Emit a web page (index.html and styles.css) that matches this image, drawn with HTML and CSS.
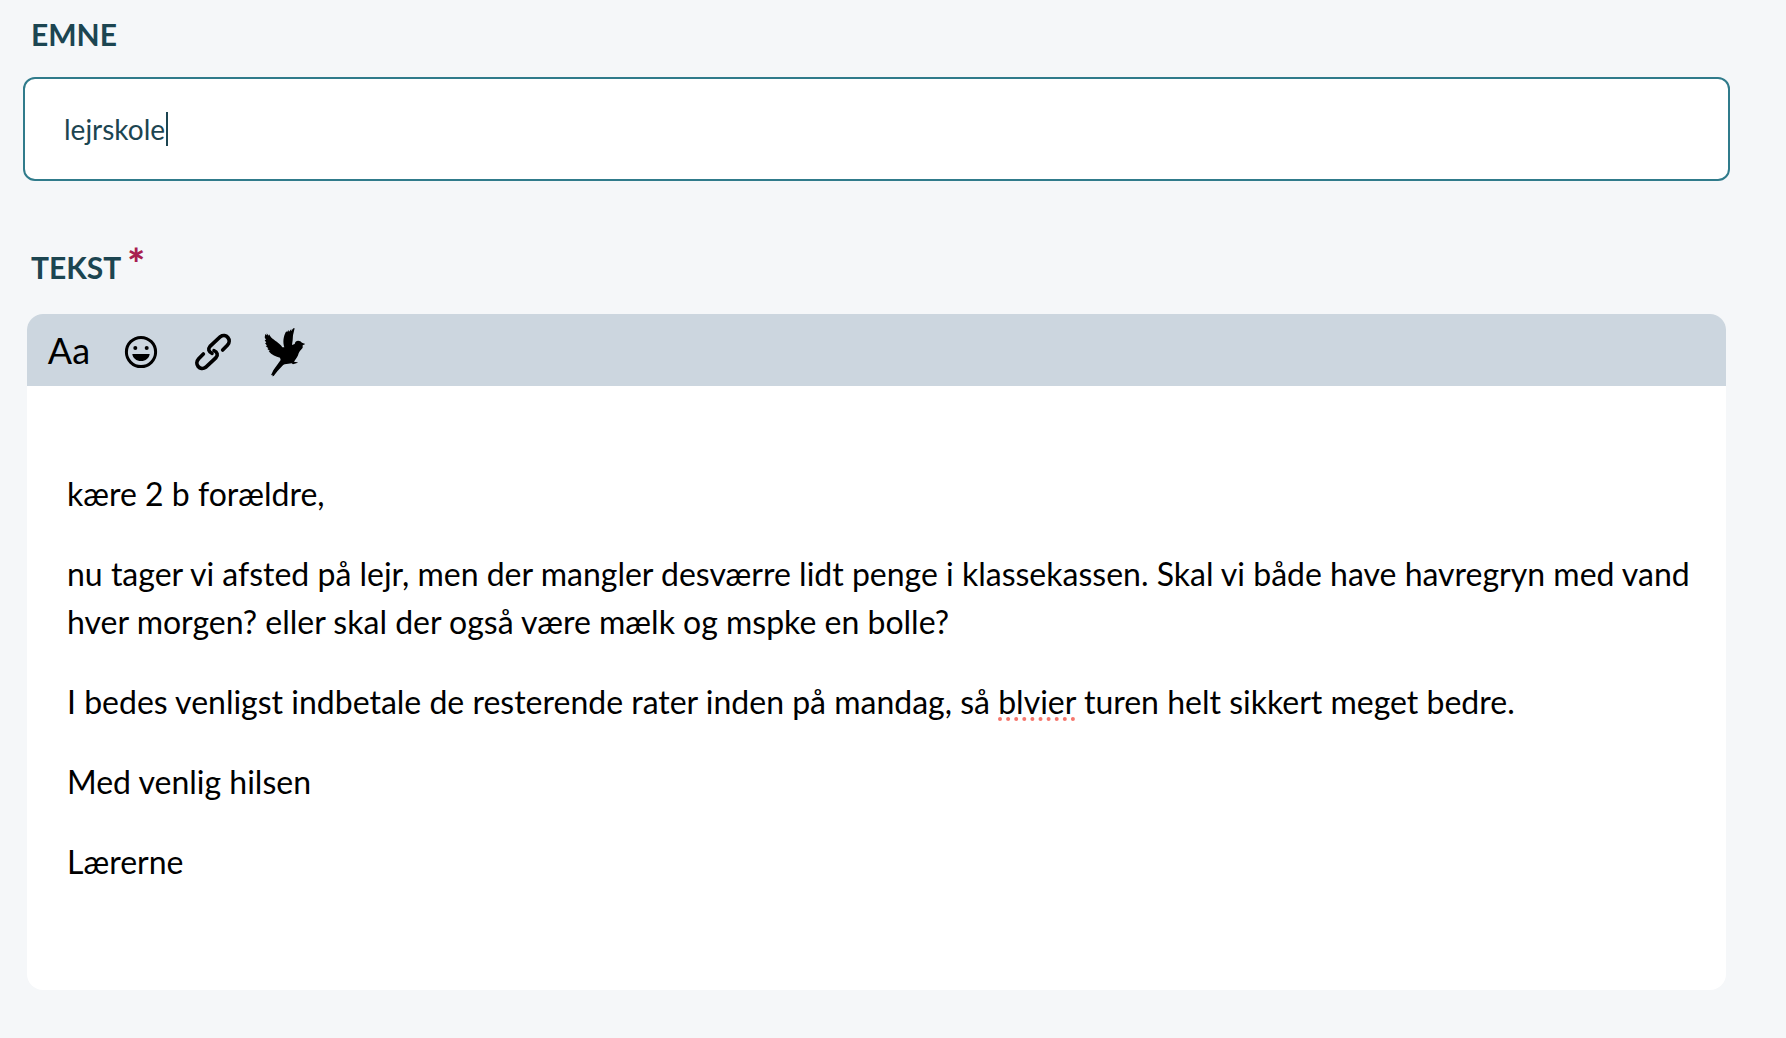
FILE: index.html
```html
<!DOCTYPE html>
<html lang="da">
<head>
<meta charset="utf-8">
<meta name="viewport" content="width=device-width, initial-scale=1">
<title>Ny besked</title>
<link rel="stylesheet" href="styles.css">
</head>
<body>
<form class="message">
  <div class="field">
    <label class="label" for="subject">EMNE</label>
    <div class="subject-box">
      <input class="subject" id="subject" type="text" value="lejrskole" spellcheck="false">
      <span class="caret"></span>
    </div>
  </div>
  <div class="field">
    <div class="label" id="text-label">TEKST<span class="required">*</span></div>
    <div class="editor">
      <div class="toolbar" role="toolbar">
        <button class="tool tool-text" type="button">Aa</button>
        <button class="tool" type="button" aria-label="Emoji">
          <svg class="icon" viewBox="0 -2 48 48">
            <circle cx="24" cy="24" r="14.6" fill="none" stroke="#000" stroke-width="3"/>
            <circle cx="18.300" cy="20" r="2"/><circle cx="29.700" cy="20" r="2"/>
            <path d="M15.300 26h17.400c-.6 4.300-4 7-8.700 7s-8.100-2.700-8.700-7z"/>
          </svg>
        </button>
        <button class="tool" type="button" aria-label="Link">
          <svg class="icon" viewBox="-3 -12 144 144" fill="none" stroke="#000" stroke-width="11" stroke-linecap="round">
            <path d="M98 60L112 46C127 30 108 8 91 20L60 49C53 57 56 66 66 70"/>
            <path d="M40 72L26 86C11 102 30 124 47 112L78 83C85 75 82 66 72 62"/>
          </svg>
        </button>
        <button class="tool" type="button" aria-label="Fugl">
          <svg class="icon icon-bird" viewBox="0 0 180 180">
            <path d="M31 42l5 4-1-6 6 7 1-4 6 9c10 10 25 16 34 30l6 0c-5-14-3-32 4-45l3-3 1 3 4-7 2 5 7-8-1 7 7-9 4 0-2 8-3 13-1 15-2 14 8-3c2-9 9-12 17-8l5 4 10 4-8 4 0 7c-3 6-10 9-12 17-2 10-8 16-14 25l9 2 3-1-3 3-7 2-5 2-4-3-10 1c-8 1-15 1-19 8l-14 15-11 14-4 1 1-5-5 2 7-15 22-31-2-7c-12-3-25-8-34-19l4-1-8-6 3-2-8-7 4-1-6-8 4-1-5-8 4 0-4-8z"/>
          </svg>
        </button>
      </div>
      <div class="content" contenteditable="true" role="textbox" aria-multiline="true" aria-labelledby="text-label" spellcheck="false">
        <p>kære 2 b forældre,</p>
        <p>nu tager vi afsted på lejr, men der mangler desværre lidt penge i klassekassen. Skal vi både have havregryn med vand hver morgen? eller skal der også være mælk og mspke en bolle?</p>
        <p>I bedes venligst indbetale de resterende rater inden på mandag, så <span class="misspelled">blvier</span> turen helt sikkert meget bedre.</p>
        <p>Med venlig hilsen</p>
        <p>Lærerne</p>
      </div>
    </div>
  </div>
</form>
</body>
</html>
```
FILE: styles.css
```css
* { box-sizing: border-box; }
body {
  margin: 0;
  background: #f5f7f9;
  color: #000;
  font-family: Lato, "Liberation Sans", sans-serif;
  font-size: 32px;
  line-height: 48px;
}
.message {
  display: flex;
  flex-direction: column;
  gap: 62px;
  padding: 10px 56px 48px 23px;
}
.label {
  display: block;
  padding-left: 8px;
  color: #1c4551;
  font-size: 30px;
  font-weight: 700;
  line-height: 48px;
}
.required {
  margin-left: 6px;
  color: #a81e51;
  font-size: 42px;
  font-weight: 900;
  line-height: 0;
}
.subject-box {
  position: relative;
  margin-top: 19px;
}
.subject {
  display: block;
  width: 100%;
  height: 104px;
  padding: 0 39px;
  border: 2px solid #307b8b;
  border-radius: 12px;
  outline: none;
  background: #fff;
  color: #1c4551;
  font: inherit;
  font-size: 28px;
}
.caret {
  position: absolute;
  top: 35px;
  left: 143px;
  width: 2px;
  height: 34px;
  background: #1c4551;
}
.editor {
  margin: 23px 4px 0;
  overflow: hidden;
  border-radius: 16px;
  background: #fff;
}
.toolbar {
  display: flex;
  align-items: center;
  height: 72px;
  padding-left: 6px;
  background: #ccd6df;
}
.tool {
  display: flex;
  align-items: center;
  justify-content: center;
  width: 72px;
  height: 72px;
  padding: 0;
  border: 0;
  background: none;
  color: #000;
  font: inherit;
}
.tool-text { font-size: 36px; }
.icon {
  width: 48px;
  height: 48px;
}
.icon-bird {
  width: 60px;
  height: 60px;
}
.content {
  padding: 84px 24px 104px 40px;
  outline: none;
}
.content p { margin: 0 0 32px; }
.content p:last-child { margin-bottom: 0; }
.misspelled {
  text-decoration: underline dotted #f5766c 4px;
  text-underline-offset: 3px;
  text-decoration-skip-ink: none;
}
```
